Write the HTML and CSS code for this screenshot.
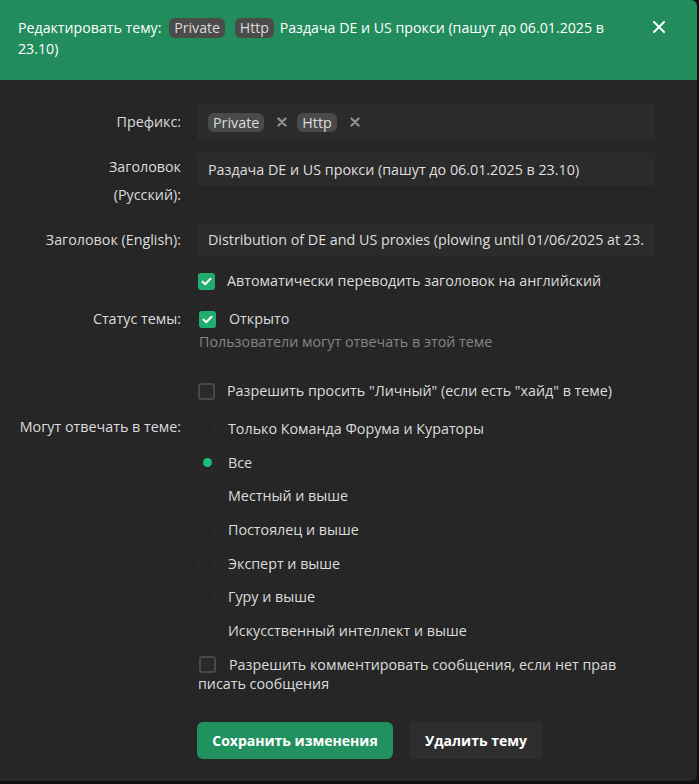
FILE: index.html
```html
<!DOCTYPE html>
<html lang="ru">
<head>
<meta charset="utf-8">
<title>Редактировать тему</title>
<link rel="stylesheet" href="styles.css">
</head>
<body>
<div class="modal">
  <div class="modal-head">
    <div class="head-title"><span>Редактировать тему:</span> <span class="htag">Private</span> <span class="htag">Http</span> <span>Раздача DE и US прокси (пашут до 06.01.2025 в</span> <span>23.10)</span></div>
    <span class="close">
      <svg width="12" height="12" viewBox="0 0 12 12"><path d="M1 1L11 11M11 1L1 11" stroke="#fff" stroke-width="2" stroke-linecap="round"/></svg>
    </span>
  </div>
  <div class="modal-body">
    <div class="row row-prefix">
      <div class="label">Префикс:</div>
      <div class="field tagbox">
        <span class="tag">Private</span><span class="tag-x"><svg width="10" height="10" viewBox="0 0 10 10"><path d="M1.5 1.5L8.5 8.5M8.5 1.5L1.5 8.5" stroke="#8e8e8e" stroke-width="2.4" stroke-linecap="round"/></svg></span>
        <span class="tag">Http</span><span class="tag-x"><svg width="10" height="10" viewBox="0 0 10 10"><path d="M1.5 1.5L8.5 8.5M8.5 1.5L1.5 8.5" stroke="#8e8e8e" stroke-width="2.4" stroke-linecap="round"/></svg></span>
      </div>
    </div>
    <div class="row row-ru">
      <div class="label">Заголовок<br>(Русский):</div>
      <div class="field input">Раздача DE и US прокси (пашут до 06.01.2025 в 23.10)</div>
    </div>
    <div class="row row-en">
      <div class="label">Заголовок (English):</div>
      <div class="field input">Distribution of DE and US proxies (plowing until 01/06/2025 at 23.</div>
    </div>
    <div class="row row-auto">
      <div class="label"></div>
      <div class="check-line"><span class="cb on"><svg width="11" height="9" viewBox="0 0 11 9"><path d="M1.5 4.6L4.2 7.2L9.5 1.8" stroke="#fff" stroke-width="2" fill="none" stroke-linecap="round" stroke-linejoin="round"/></svg></span>Автоматически переводить заголовок на английский</div>
    </div>
    <div class="row row-status">
      <div class="label">Статус темы:</div>
      <div>
        <div class="check-line"><span class="cb on"><svg width="11" height="9" viewBox="0 0 11 9"><path d="M1.5 4.6L4.2 7.2L9.5 1.8" stroke="#fff" stroke-width="2" fill="none" stroke-linecap="round" stroke-linejoin="round"/></svg></span>Открыто</div>
        <div class="hint">Пользователи могут отвечать в этой теме</div>
      </div>
    </div>
    <div class="row row-private">
      <div class="label"></div>
      <div class="check-line"><span class="cb"></span>Разрешить просить "Личный" (если есть "хайд" в теме)</div>
    </div>
    <div class="row row-reply">
      <div class="label label-reply">Могут отвечать в теме:</div>
      <div class="radios">
        <div class="radio-line"><span class="rb"></span>Только Команда Форума и Кураторы</div>
        <div class="radio-line"><span class="rb on"></span>Все</div>
        <div class="radio-line"><span class="rb"></span>Местный и выше</div>
        <div class="radio-line"><span class="rb"></span>Постоялец и выше</div>
        <div class="radio-line"><span class="rb"></span>Эксперт и выше</div>
        <div class="radio-line"><span class="rb"></span>Гуру и выше</div>
        <div class="radio-line"><span class="rb"></span>Искусственный интеллект и выше</div>
      </div>
    </div>
    <div class="row row-comment">
      <div class="label"></div>
      <div class="comment-text"><span class="cb"></span>Разрешить комментировать сообщения, если нет прав писать сообщения</div>
    </div>
    <div class="row row-buttons">
      <div class="label"></div>
      <div class="buttons">
        <button class="btn btn-save">Сохранить изменения</button>
        <button class="btn btn-del">Удалить тему</button>
      </div>
    </div>
  </div>
</div>
</body>
</html>
```

FILE: styles.css
```css
html, body {
  margin: 0;
  padding: 0;
  background: #111111;
}
body {
  font-family: "Open Sans", "Noto Sans", sans-serif;
  font-size: 14.3px;
  color: #dcdcdc;
}
.modal {
  width: 697px;
  height: 781px;
  background: #262626;
  border-radius: 0 6px 6px 0;
  overflow: hidden;
}
.modal-head {
  background: #228c5d;
  height: 80px;
  box-sizing: border-box;
  padding: 17px 20px 0 18px;
  display: flex;
  align-items: flex-start;
  justify-content: space-between;
  color: #ffffff;
}
.head-title {
  width: 600px;
  line-height: 21px;
  font-size: 14.2px;
}
.htag {
  display: inline-block;
  background: #4b4b4b;
  color: #dadada;
  border-radius: 6px;
  padding: 0 5px;
  line-height: 20px;
  margin: 0 2px 0 4px;
}
.close {
  margin-top: 4px;
  margin-right: 12px;
  display: flex;
}
.modal-body {
  padding: 24px 0 0 0;
}
.row {
  display: grid;
  grid-template-columns: 181px 458px;
  column-gap: 16px;
}
.label {
  text-align: right;
  color: #dcdcdc;
}
.field {
  background: #2b2b2b;
  box-sizing: border-box;
  padding: 0 11px;
  display: flex;
  align-items: center;
  white-space: nowrap;
  overflow: hidden;
}
.row-prefix {
  margin-bottom: 13px;
}
.row-prefix .label {
  line-height: 36px;
}
.tagbox {
  height: 36px;
}
.tag {
  background: #4a4a4a;
  color: #dcdcdc;
  border-radius: 6px;
  padding: 0 5px;
  line-height: 19px;
}
.tag-x {
  display: flex;
  margin: 0 10px 0 13px;
}
.row-ru {
  margin-bottom: 14px;
}
.row-ru .label {
  line-height: 28px;
}
.input {
  height: 33px;
  color: #dedede;
}
.row-ru .input {
  align-self: start;
}
.row-en {
  margin-bottom: 15px;
}
.row-en .label {
  line-height: 33px;
}
.check-line {
  display: flex;
  align-items: center;
  line-height: 20px;
}
.cb {
  width: 17px;
  height: 17px;
  box-sizing: border-box;
  border: 2px solid #484848;
  border-radius: 3px;
  background: #2a2a2a;
  margin: 0 12px 0 1px;
  flex: none;
  display: flex;
  align-items: center;
  justify-content: center;
}
.cb.on {
  background: #1fae6e;
  border-color: #1fae6e;
}
.row-auto {
  margin-bottom: 18px;
}
.row-status .label {
  line-height: 20px;
}
.row-status .check-line .cb {
  margin-left: 2px;
  margin-right: 13px;
}
.hint {
  color: #858585;
  line-height: 20px;
  margin-top: 3px;
  margin-left: 2px;
}
.row-status {
  margin-bottom: 29px;
}
.row-private {
  margin-bottom: 18px;
}
.label-reply {
  line-height: 14px;
  padding-top: 1px;
}
.radio-line {
  display: flex;
  line-height: 20px;
  height: 33.7px;
  align-items: flex-start;
}
.rb {
  width: 18px;
  height: 18px;
  box-sizing: border-box;
  border-radius: 50%;
  border: 1px solid #2d2d2d;
  margin: 1px 12px 0 1px;
  flex: none;
  display: flex;
  align-items: center;
  justify-content: center;
}
.rb.on::after {
  content: "";
  width: 9px;
  height: 9px;
  border-radius: 50%;
  background: #19bf78;
}
.row-comment {
  margin-top: 0;
}
.comment-text {
  line-height: 19px;
  padding-left: 1px;
}
.comment-text .cb {
  display: inline-block;
  vertical-align: -3px;
  margin: 0 13px 0 1px;
}
.row-buttons {
  margin-top: 29px;
}
.buttons {
  display: flex;
  gap: 17px;
}
.btn {
  font-family: "Open Sans", "Noto Sans", sans-serif;
  font-size: 14px;
  font-weight: 700;
  color: #ffffff;
  border: none;
  border-radius: 6px;
  height: 37px;
  cursor: pointer;
}
.btn-save {
  background: #229160;
  width: 196px;
}
.btn-del {
  background: #2e2e2e;
  width: 132px;
  border-radius: 4px;
}
```
